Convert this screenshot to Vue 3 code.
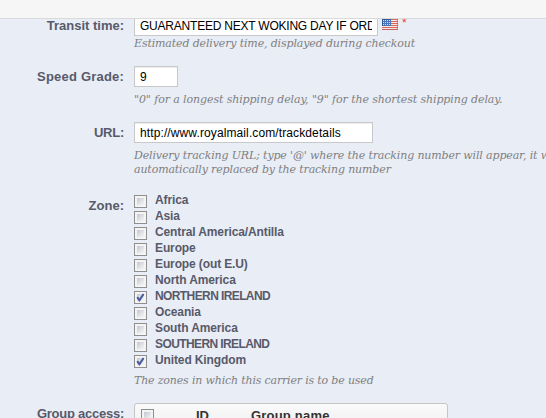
<template>
  <div class="page">
    <div class="toolbar"></div>
    <form class="carrier-form" @submit.prevent>
      <div class="row row-transit">
        <label class="row-label" for="delay">Transit time:</label>
        <div class="field">
          <div class="input-line">
            <input id="delay" v-model="delay" class="input input-delay" type="text" />
            <svg class="flag" width="16" height="11" viewBox="0 0 16 11" shape-rendering="crispEdges">
              <rect width="16" height="11" fill="#f6e6e4" />
              <path d="M0 .5H16M0 2.5H16M0 4.5H16M0 6.5H16M0 8.5H16M0 10.5H16" stroke="#d9695c" />
              <rect width="9" height="7" fill="#4873bb" />
              <path d="M1 1.5H8M1 3.5H8M1 5.5H8" stroke="#d3e0f5" stroke-dasharray="1 1" />
              <path d="M0 10.5H16M15.5 0V11" stroke="#a8605f" stroke-opacity=".6" fill="none" />
              <path d="M.5 0V7M0 .5H9" stroke="#34589c" fill="none" />
            </svg>
            <span class="required">*</span>
          </div>
          <p class="hint hint-transit">Estimated delivery time, displayed during checkout</p>
        </div>
      </div>

      <div class="row row-grade">
        <label class="row-label label-wide" for="grade">Speed Grade:</label>
        <div class="field">
          <input id="grade" v-model="grade" class="input input-grade" type="text" />
          <p class="hint hint-grade">"0" for a longest shipping delay, "9" for the shortest shipping delay.</p>
        </div>
      </div>

      <div class="row row-url">
        <label class="row-label label-tight" for="url">URL:</label>
        <div class="field">
          <input id="url" v-model="url" class="input input-url" type="text" />
          <p class="hint hint-url">
            Delivery tracking URL; type '@' where the tracking number will appear, it will be<br />
            automatically replaced by the tracking number
          </p>
        </div>
      </div>

      <div class="row row-zone">
        <span class="row-label">Zone:</span>
        <div class="field">
          <label v-for="zone in zones" :key="zone.name" class="zone">
            <input v-model="zone.checked" class="check" type="checkbox" />
            <span class="box">
              <svg v-if="zone.checked" width="9" height="9" viewBox="0 0 9 9">
                <path d="M1.2 4.2L3.4 7.2L7.6 1" />
              </svg>
            </span>
            <span class="zone-name" :class="{ caps: zone.name === zone.name.toUpperCase() }">{{ zone.name }}</span>
          </label>
          <p class="hint hint-zone">The zones in which this carrier is to be used</p>
        </div>
      </div>

      <div class="row row-group">
        <span class="row-label label-tight">Group access:</span>
        <div class="group-table">
          <span class="box"></span>
          <span class="col-id">ID</span>
          <span class="col-name">Group name</span>
        </div>
      </div>
    </form>
  </div>
</template>

<script setup>
import { ref } from 'vue'

const delay = ref('GUARANTEED NEXT WOKING DAY IF ORDERED BEFORE 12PM')
const grade = ref('9')
const url = ref('http://www.royalmail.com/trackdetails')

const zones = ref([
  { name: 'Africa', checked: false },
  { name: 'Asia', checked: false },
  { name: 'Central America/Antilla', checked: false },
  { name: 'Europe', checked: false },
  { name: 'Europe (out E.U)', checked: false },
  { name: 'North America', checked: false },
  { name: 'NORTHERN IRELAND', checked: true },
  { name: 'Oceania', checked: false },
  { name: 'South America', checked: false },
  { name: 'SOUTHERN IRELAND', checked: false },
  { name: 'United Kingdom', checked: true }
])
</script>

<style>
body {
  overflow: hidden;
}
</style>

<style scoped>
.page {
  position: relative;
  width: 546px;
  height: 418px;
  overflow: hidden;
  background: #e9edf6;
  color: #585a69;
  font-family: "Liberation Sans", Arial, sans-serif;
}

.toolbar {
  position: absolute;
  top: 0;
  left: 0;
  z-index: 2;
  width: 100%;
  height: 19px;
  box-sizing: border-box;
  background: rgba(246, 246, 246, 0.97);
  border-bottom: 1px solid #dadada;
}

.carrier-form {
  padding-top: 15px;
}

.row {
  display: grid;
  grid-template-columns: 124px 1fr;
  column-gap: 10px;
  align-items: start;
}

.row-transit {
  height: 51px;
}

.row-grade {
  height: 56px;
}

.row-url {
  height: 73px;
}

.row-zone {
  height: 208px;
}

.row-label {
  padding-top: 3px;
  font-size: 13px;
  font-weight: bold;
  line-height: 15px;
  text-align: right;
  white-space: nowrap;
}

.label-wide {
  letter-spacing: 0.2px;
}

.label-tight {
  letter-spacing: -0.25px;
}

.input-line {
  display: flex;
}

.input {
  display: block;
  box-sizing: border-box;
  height: 21px;
  padding: 0 5px;
  border: 1px solid #c8c8c8;
  border-radius: 0;
  background: #fff;
  box-shadow: inset 0 1px 1px #eee;
  color: #000;
  font-family: "Liberation Sans", Arial, sans-serif;
  font-size: 12px;
  outline: none;
}

.input-delay {
  width: 244px;
  letter-spacing: -0.22px;
}

.input-grade {
  width: 44px;
}

.input-url {
  width: 239px;
  letter-spacing: 0.11px;
}

.flag {
  margin: 4px 4px 0;
}

.required {
  padding-top: 2px;
  color: #f03c32;
  font-size: 12px;
  line-height: 12px;
}

.hint {
  margin: 0;
  padding-top: 1px;
  color: #7f7f7f;
  font-family: "DejaVu Serif", Georgia, serif;
  font-size: 11px;
  font-style: italic;
  line-height: 14px;
  letter-spacing: -0.14px;
  white-space: nowrap;
}

.hint-grade {
  padding-top: 6px;
  letter-spacing: -0.1px;
}

.hint-url {
  padding-top: 6px;
}

.hint-zone {
  padding-top: 3px;
  letter-spacing: -0.17px;
}

.zone {
  display: flex;
  height: 16px;
}

.check {
  display: none;
}

.box {
  display: block;
  flex: none;
  box-sizing: border-box;
  width: 13px;
  height: 13px;
  border: 1px solid #8e8f8f;
  background: linear-gradient(135deg, #c4c8d0, #f6f6f6) 2px 2px / 7px 7px no-repeat, #f4f4f4;
}

.box svg {
  display: block;
  margin: 1px;
  fill: none;
  stroke: #445a9c;
  stroke-width: 2;
}

.zone-name {
  margin-left: 8px;
  font-size: 12px;
  font-weight: bold;
  line-height: 10px;
  letter-spacing: -0.12px;
}

.caps {
  letter-spacing: -0.6px;
}

.group-table {
  display: flex;
  box-sizing: border-box;
  width: 314px;
  height: 32px;
  padding: 5px 6px;
  border: 1px solid #c6c6c6;
  border-radius: 3px;
  background: linear-gradient(#fafafa, #ececec);
  color: #333;
  font-size: 13px;
  font-weight: bold;
  line-height: 14px;
}

.col-id {
  width: 55px;
  margin-left: 42px;
}

.col-name {
  letter-spacing: 0.2px;
}
</style>
